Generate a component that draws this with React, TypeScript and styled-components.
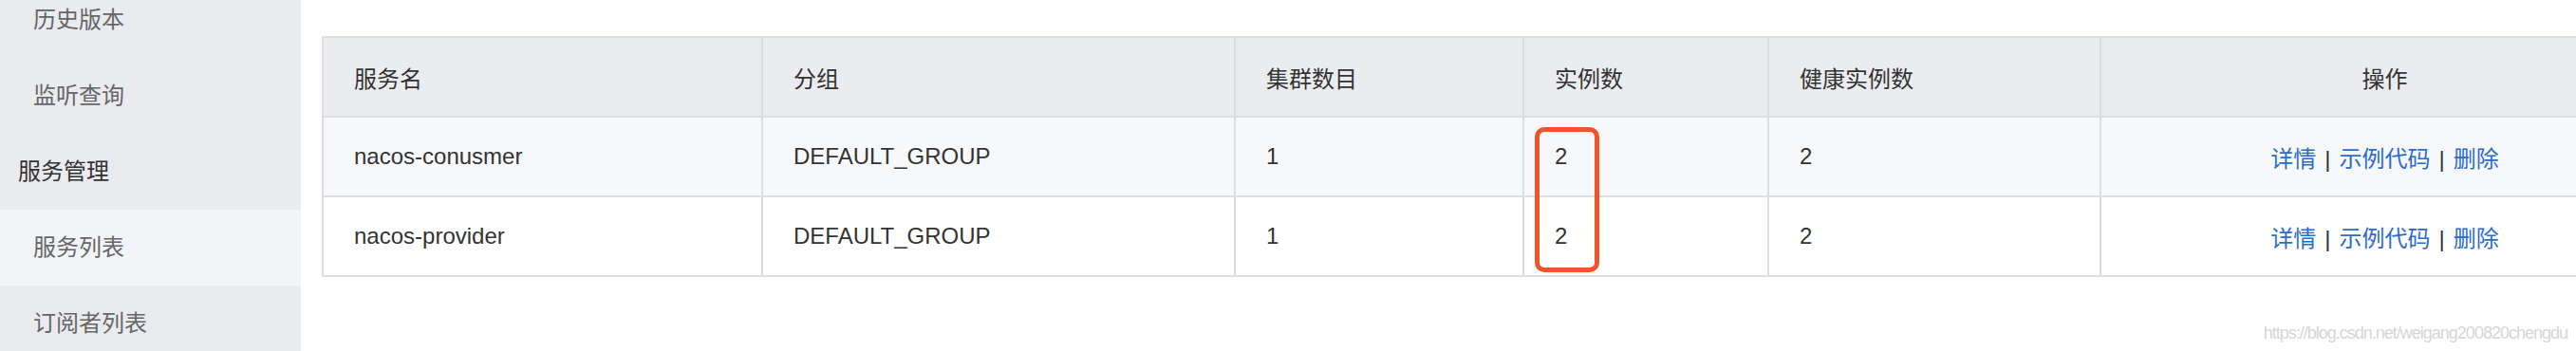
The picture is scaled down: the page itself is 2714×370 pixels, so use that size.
import React from "react"
import styled, { createGlobalStyle } from "styled-components"

const GlobalStyle = createGlobalStyle`
  html, body {
    margin: 0;
    padding: 0;
    background: #fff;
    overflow: hidden;
  }
  body {
    font-family: "Liberation Sans", "Noto Sans CJK SC", Arial, sans-serif;
    font-size: 24px;
    color: #333;
  }
`

const Page = styled.div`
  position: relative;
  display: flex;
  height: 100vh;
  overflow: hidden;
`

const Sidebar = styled.nav`
  flex: 0 0 317px;
  background: #e9ebef;
  overflow: hidden;
`

const MenuList = styled.ul`
  list-style: none;
  margin: -19px 0 0;
  padding: 0;
`

const MenuItem = styled.li<{ group?: boolean; active?: boolean }>`
  height: 80px;
  line-height: 80px;
  padding-left: ${({ group }) => (group ? "19px" : "35px")};
  color: ${({ group }) => (group ? "#333" : "#666")};
  background: ${({ active }) => (active ? "#f3f4f7" : "transparent")};
  white-space: nowrap;
`

const Main = styled.main`
  flex: 1;
  min-width: 0;
  padding: 38px 0 0 22px;
  overflow: hidden;
`

const TableWrap = styled.div`
  position: relative;
  width: 2474px;
`

const Table = styled.table`
  width: 2474px;
  table-layout: fixed;
  border-collapse: separate;
  border-spacing: 0;
  border-top: 2px solid #dcdee3;
  border-left: 2px solid #dcdee3;
`

const HeadCell = styled.th<{ center?: boolean }>`
  height: 82px;
  padding: 0 32px;
  background: #ebecf0;
  border-right: 2px solid #dcdee3;
  border-bottom: 2px solid #dcdee3;
  font-weight: normal;
  text-align: ${({ center }) => (center ? "center" : "left")};
  color: #333;
  box-sizing: content-box;
`

const Row = styled.tr<{ striped?: boolean }>`
  background: ${({ striped }) => (striped ? "#f7f8fa" : "#fff")};
`

const Cell = styled.td<{ center?: boolean }>`
  height: 82px;
  padding: 0 32px;
  border-right: 2px solid #dcdee3;
  border-bottom: 2px solid #dcdee3;
  text-align: ${({ center }) => (center ? "center" : "left")};
  color: #333;
  white-space: nowrap;
  box-sizing: content-box;
`

const Link = styled.a`
  color: #2c6bd0;
  text-decoration: none;
  cursor: pointer;
`

const Sep = styled.span`
  margin: 0 9px;
  color: #333;
`

const Highlight = styled.div`
  position: absolute;
  left: 1278px;
  top: 96px;
  width: 58px;
  height: 143px;
  border: 5px solid #ef5528;
  border-radius: 10px;
  pointer-events: none;
`

const Watermark = styled.div`
  position: absolute;
  right: 9px;
  top: 341px;
  font-size: 18px;
  line-height: 20px;
  letter-spacing: -1px;
  color: #d6d6d6;
  white-space: nowrap;
`

const menu = [
  { label: "历史版本" },
  { label: "监听查询" },
  { label: "服务管理", group: true },
  { label: "服务列表", active: true },
  { label: "订阅者列表" },
]

const columns = [
  { title: "服务名", width: 463 },
  { title: "分组", width: 498 },
  { title: "集群数目", width: 304 },
  { title: "实例数", width: 258 },
  { title: "健康实例数", width: 350 },
  { title: "操作", width: 599, center: true },
]

const services = [
  { name: "nacos-conusmer", group: "DEFAULT_GROUP", clusters: 1, instances: 2, healthy: 2 },
  { name: "nacos-provider", group: "DEFAULT_GROUP", clusters: 1, instances: 2, healthy: 2 },
]

export default function App() {
  return (
    <Page>
      <GlobalStyle />
      <Sidebar>
        <MenuList>
          {menu.map(m => (
            <MenuItem key={m.label} group={m.group} active={m.active}>
              {m.label}
            </MenuItem>
          ))}
        </MenuList>
      </Sidebar>

      <Main>
        <TableWrap>
          <Table>
            <colgroup>
              {columns.map(c => (
                <col key={c.title} style={{ width: c.width }} />
              ))}
            </colgroup>
            <thead>
              <tr>
                {columns.map(c => (
                  <HeadCell key={c.title} center={c.center}>
                    {c.title}
                  </HeadCell>
                ))}
              </tr>
            </thead>
            <tbody>
              {services.map((s, i) => (
                <Row key={s.name} striped={i % 2 === 0}>
                  <Cell>{s.name}</Cell>
                  <Cell>{s.group}</Cell>
                  <Cell>{s.clusters}</Cell>
                  <Cell>{s.instances}</Cell>
                  <Cell>{s.healthy}</Cell>
                  <Cell center>
                    <Link>详情</Link>
                    <Sep>|</Sep>
                    <Link>示例代码</Link>
                    <Sep>|</Sep>
                    <Link>删除</Link>
                  </Cell>
                </Row>
              ))}
            </tbody>
          </Table>
          <Highlight />
        </TableWrap>
      </Main>

      <Watermark>https://blog.csdn.net/weigang200820chengdu</Watermark>
    </Page>
  )
}
